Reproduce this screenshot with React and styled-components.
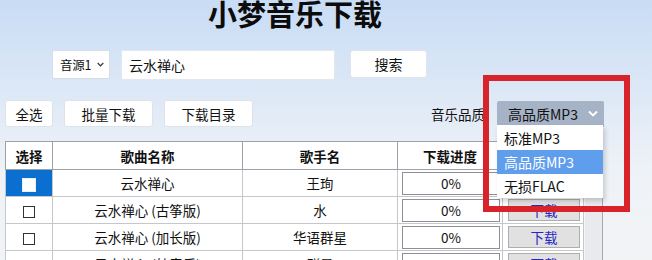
import styled, { createGlobalStyle } from "styled-components";

const GlobalStyle = createGlobalStyle`
	body {
		margin: 0;
		font-family: "Noto Sans CJK SC", "Noto Sans", sans-serif;
	}
`;

const songs = [
	{ id: 1, name: "云水禅心", singer: "王珣", checked: true },
	{ id: 2, name: "云水禅心 (古筝版)", singer: "水" },
	{ id: 3, name: "云水禅心 (加长版)", singer: "华语群星" },
	{ id: 4, name: "云水禅心 (纯音乐)", singer: "群星" },
];

const qualities = ["标准MP3", "高品质MP3", "无损FLAC"];

function Chevron({ color, size = 10 }) {
	return (
		<svg width={size} height={size * 0.7} viewBox="0 0 10 7">
			<path d="M1 1.5 L5 5.5 L9 1.5" fill="none" stroke={color} strokeWidth="1.8" />
		</svg>
	);
}

function App() {
	return (
		<Page>
			<GlobalStyle />
			<Title>小梦音乐下载</Title>

			<SearchRow>
				<SourceSelect>
					<span>音源1</span>
					<Chevron color="#333" size={7} />
				</SourceSelect>
				<SearchInput>云水禅心</SearchInput>
				<SearchButton>搜索</SearchButton>
			</SearchRow>

			<Toolbar>
				<ToolButton w={48}>全选</ToolButton>
				<ToolButton w={89}>批量下载</ToolButton>
				<ToolButton w={89}>下载目录</ToolButton>
				<Quality>
					<QualityLabel>音乐品质</QualityLabel>
					<QualitySelect>
						高品质MP3
						<Chevron color="#fff" />
					</QualitySelect>
				</Quality>
			</Toolbar>

			<TableArea>
				<SongTable>
					<colgroup>
						<col style={{ width: 47 }} />
						<col style={{ width: 190 }} />
						<col style={{ width: 155 }} />
						<col style={{ width: 105 }} />
						<col style={{ width: 81 }} />
					</colgroup>
					<thead>
						<tr>
							<Th>选择</Th>
							<Th>歌曲名称</Th>
							<Th>歌手名</Th>
							<Th>下载进度</Th>
							<Th>操作</Th>
						</tr>
					</thead>
					<tbody>
						{songs.map((song) => (
							<tr key={song.id}>
								<CheckCell selected={song.checked}>
									<CheckBox selected={song.checked} />
								</CheckCell>
								<Td>{song.name}</Td>
								<Td>{song.singer}</Td>
								<Td>
									<Progress>0%</Progress>
								</Td>
								<Td>
									<DownloadButton>下载</DownloadButton>
								</Td>
							</tr>
						))}
					</tbody>
				</SongTable>
				<ScrollTrack />
			</TableArea>

			<Dropdown>
				{qualities.map((q) => (
					<Option key={q} active={q === "高品质MP3"}>
						{q}
					</Option>
				))}
			</Dropdown>
			<Highlight />
		</Page>
	);
}

const Page = styled.div`
	width: 652px;
	height: 260px;
	overflow: hidden;
	position: relative;
	background: linear-gradient(180deg, #c8dcf5 0%, #dde8f6 35%, #eef2f7 65%, #f2f3f5 100%);
	color: #111;
	white-space: nowrap;
`;

const Title = styled.h1`
	margin: 0;
	padding-left: 208px;
	height: 30px;
	font-size: 29px;
	line-height: 27px;
	font-weight: 700;
	color: #0c0c0c;
`;

const SearchRow = styled.div`
	display: flex;
	align-items: flex-start;
	margin-top: 20px;
	padding-left: 52px;
	gap: 11px;
	font-size: 14px;
`;

const SourceSelect = styled.div`
	box-sizing: border-box;
	width: 58px;
	height: 29px;
	display: flex;
	align-items: center;
	justify-content: space-between;
	padding: 0 5px 0 7px;
	background: #fff;
	border: 1px solid #d6dde6;
	border-radius: 2px;
	font-size: 12.5px;
	letter-spacing: -0.3px;
`;

const SearchInput = styled.div`
	box-sizing: border-box;
	width: 214px;
	height: 30px;
	display: flex;
	align-items: center;
	padding-left: 7px;
	background: #fff;
	border: 1px solid #e2e8ef;
`;

const SearchButton = styled.div`
	box-sizing: border-box;
	width: 77px;
	height: 28px;
	margin-left: 4px;
	display: flex;
	align-items: center;
	justify-content: center;
	background: #fff;
	border: 1px solid #dfe5ec;
	border-radius: 3px;
`;

const Toolbar = styled.div`
	display: flex;
	align-items: center;
	width: 604px;
	height: 27px;
	margin-top: 20px;
	padding-left: 5px;
	gap: 11px;
	box-sizing: border-box;
	font-size: 13.5px;
`;

const ToolButton = styled.div`
	box-sizing: border-box;
	width: ${({ w }) => w}px;
	height: 27px;
	display: flex;
	align-items: center;
	justify-content: center;
	background: #fff;
	border: 1px solid #dde3eb;
	border-radius: 3px;
`;

const Quality = styled.div`
	margin-left: auto;
	display: flex;
	align-items: center;
	gap: 12px;
`;

const QualityLabel = styled.span`
	font-size: 13.5px;
`;

const QualitySelect = styled.div`
	box-sizing: border-box;
	width: 107px;
	height: 26px;
	display: flex;
	align-items: center;
	justify-content: space-between;
	padding: 0 6px 0 11px;
	background: #a6b2c6;
	border-radius: 2px 2px 0 0;
	font-size: 14px;
`;

const TableArea = styled.div`
	display: flex;
	margin-top: 14px;
	margin-left: 5px;
	width: 598px;
	height: 140px;
	border-right: 1px solid #a5a9ae;
	box-sizing: border-box;
`;

const SongTable = styled.table`
	width: 579px;
	border-collapse: collapse;
	table-layout: fixed;
	background: #fff;
	font-size: 13.5px;
	align-self: flex-start;
`;

const Th = styled.th`
	height: 27px;
	padding: 0;
	border: 1px solid #9ea2a8;
	font-weight: 700;
	text-align: center;
`;

const Td = styled.td`
	height: 26px;
	padding: 0;
	border: 1px solid #c4c7cc;
	border-top-color: #d2d5d9;
	text-align: center;
`;

const CheckCell = styled(Td)`
	background: ${({ selected }) => (selected ? "#0b6fd0" : "#fff")};
`;

const CheckBox = styled.span`
	display: inline-block;
	vertical-align: middle;
	box-sizing: border-box;
	width: ${({ selected }) => (selected ? 14 : 12)}px;
	height: ${({ selected }) => (selected ? 14 : 12)}px;
	background: #fff;
	border: 1px solid ${({ selected }) => (selected ? "#e8eef7" : "#333")};
`;

const Progress = styled.div`
	box-sizing: border-box;
	width: 98px;
	height: 23px;
	margin: 0 auto 0 4px;
	display: flex;
	align-items: center;
	justify-content: center;
	border: 1px solid #8d9197;
	background: #fff;
`;

const DownloadButton = styled.div`
	box-sizing: border-box;
	width: 72px;
	height: 22px;
	margin-left: 5px;
	display: flex;
	align-items: center;
	justify-content: center;
	background: #e1e1e1;
	border: 1px solid #adadad;
	color: #2626c4;
`;

const ScrollTrack = styled.div`
	flex: 1;
	background: #e8eaed;
	border-left: 1px solid #f6f6f6;
`;

const Dropdown = styled.div`
	position: absolute;
	left: 497px;
	top: 125px;
	width: 106px;
	background: #fff;
	box-shadow: 2px 3px 5px rgba(0, 0, 0, 0.18);
	font-size: 14px;
`;

const Option = styled.div`
	height: 24px;
	display: flex;
	align-items: center;
	padding-left: 7px;
	background: ${({ active }) => (active ? "#5f9ded" : "#fff")};
	color: ${({ active }) => (active ? "#fff" : "#111")};
	&:first-child {
		height: 25px;
	}
`;

const Highlight = styled.div`
	position: absolute;
	left: 483px;
	top: 75px;
	width: 147px;
	height: 137px;
	box-sizing: border-box;
	border: 6px solid #d9232b;
`;

export default App;
